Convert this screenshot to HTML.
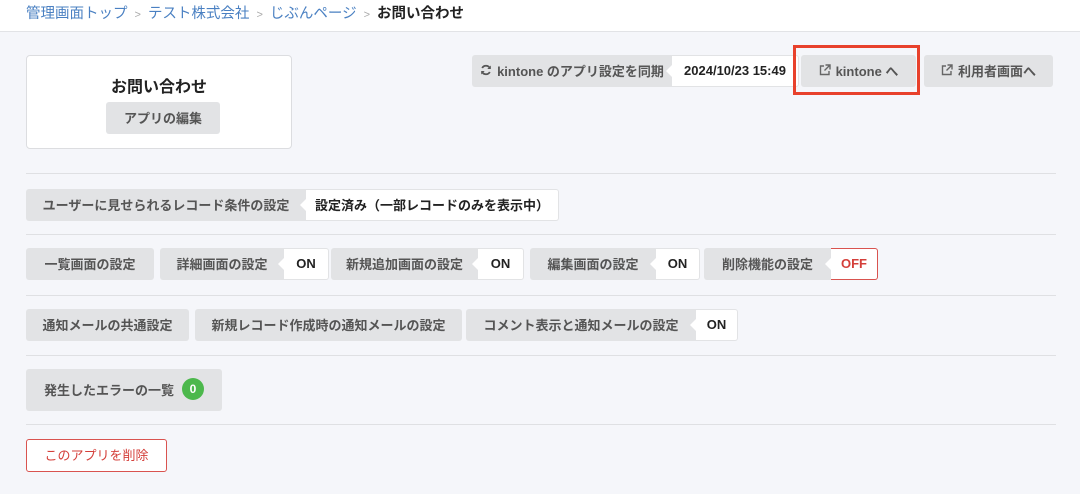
<!DOCTYPE html>
<html><head><meta charset="utf-8"><style>
*{box-sizing:border-box;margin:0;padding:0}
body{width:1080px;height:494px;background:#f5f6fa;font-family:"Liberation Sans","Noto Sans CJK JP",sans-serif;position:relative;overflow:hidden;color:#333}
.hdr{position:absolute;left:0;top:0;width:1080px;height:32px;background:#fff;border-bottom:1px solid #e2e3e6;font-size:14.5px;line-height:28px;padding-left:26px;white-space:nowrap}
.hdr a{color:#4a80c2;text-decoration:none}
.hdr .s{color:#aaa;font-size:11px;margin:0 7px}
.hdr b{color:#222}
.a{position:absolute}
.btn{position:absolute;background:#e2e3e5;border-radius:3px;color:#555;font-weight:bold;font-size:13px;display:flex;align-items:center;justify-content:center;white-space:nowrap;padding-bottom:2px}
.w{position:absolute;background:#fff;border-radius:0 3px 3px 0;color:#222;font-weight:bold;font-size:13px;display:flex;align-items:center;justify-content:center;white-space:nowrap;border:1px solid #e2e3e5;border-left:none;padding-bottom:2px}
.w:before{content:"";position:absolute;left:-6px;top:50%;margin-top:-6px;border-right:6px solid #fff;border-top:6px solid transparent;border-bottom:6px solid transparent}
.hr{position:absolute;left:26px;width:1030px;height:1px;background:#dfe0e3}
svg{margin-right:5px}
</style></head><body>
<div class="hdr"><a>管理画面トップ</a><span class="s">&gt;</span><a>テスト株式会社</a><span class="s">&gt;</span><a>じぶんページ</a><span class="s">&gt;</span><b>お問い合わせ</b></div>

<div class="a" style="left:26px;top:55px;width:266px;height:94px;background:#fff;border:1px solid #dcdde0;border-radius:4px"></div>
<div class="a" style="left:26px;top:73px;width:266px;text-align:center;font-weight:bold;font-size:16px;color:#222">お問い合わせ</div>
<div class="btn" style="left:106px;top:102px;width:114px;height:32px">アプリの編集</div>

<div class="btn" style="left:472px;top:55px;width:200px;height:32px;border-radius:3px 0 0 3px"><svg width="12" height="12" viewBox="0 0 12 12"><path d="M10 4.5A4.3 4.3 0 0 0 2.2 4M2 7.5A4.3 4.3 0 0 0 9.8 8" fill="none" stroke="#555" stroke-width="1.8"/><path d="M10.8 1.5V5H7.3zM1.2 10.5V7h3.5z" fill="#555"/></svg>kintone のアプリ設定を同期</div>
<div class="w" style="left:672px;top:55px;width:127px;height:32px">2024/10/23 15:49</div>
<div class="btn" style="left:801px;top:55px;width:115px;height:32px"><svg width="12" height="12" viewBox="0 0 12 12"><path d="M5 2H1.5v8.5H10V7M6.5 1H11v4.5M11 1L5.5 6.5" fill="none" stroke="#666" stroke-width="1.4"/></svg>kintone へ</div>
<div class="a" style="left:793px;top:45px;width:127px;height:50px;border:3px solid #e8412c"></div>
<div class="btn" style="left:924px;top:55px;width:129px;height:32px"><svg width="12" height="12" viewBox="0 0 12 12"><path d="M5 2H1.5v8.5H10V7M6.5 1H11v4.5M11 1L5.5 6.5" fill="none" stroke="#666" stroke-width="1.4"/></svg>利用者画面へ</div>

<div class="hr" style="top:173px"></div>
<div class="btn" style="left:26px;top:189px;width:280px;height:32px;border-radius:3px 0 0 3px">ユーザーに見せられるレコード条件の設定</div>
<div class="w" style="left:306px;top:189px;width:253px;height:32px">設定済み（一部レコードのみを表示中）</div>

<div class="hr" style="top:234px"></div>
<div class="btn" style="left:26px;top:248px;width:128px;height:32px">一覧画面の設定</div>
<div class="btn" style="left:160px;top:248px;width:124px;height:32px;border-radius:3px 0 0 3px">詳細画面の設定</div>
<div class="w" style="left:284px;top:248px;width:45px;height:32px">ON</div>
<div class="btn" style="left:331px;top:248px;width:147px;height:32px;border-radius:3px 0 0 3px">新規追加画面の設定</div>
<div class="w" style="left:478px;top:248px;width:46px;height:32px">ON</div>
<div class="btn" style="left:530px;top:248px;width:126px;height:32px;border-radius:3px 0 0 3px">編集画面の設定</div>
<div class="w" style="left:656px;top:248px;width:44px;height:32px">ON</div>
<div class="btn" style="left:704px;top:248px;width:127px;height:32px;border-radius:3px 0 0 3px">削除機能の設定</div>
<div class="w" style="left:831px;top:248px;width:47px;height:32px;border:1px solid #d9534f;border-left:none;color:#d43f3a">OFF</div>

<div class="hr" style="top:295px"></div>
<div class="btn" style="left:26px;top:309px;width:163px;height:32px">通知メールの共通設定</div>
<div class="btn" style="left:195px;top:309px;width:267px;height:32px">新規レコード作成時の通知メールの設定</div>
<div class="btn" style="left:466px;top:309px;width:230px;height:32px;border-radius:3px 0 0 3px">コメント表示と通知メールの設定</div>
<div class="w" style="left:696px;top:309px;width:42px;height:32px">ON</div>

<div class="hr" style="top:355px"></div>
<div class="btn" style="left:26px;top:369px;width:196px;height:42px">発生したエラーの一覧<span style="display:inline-block;width:22px;height:22px;border-radius:11px;background:#4cb84c;color:#fff;font-size:12px;line-height:22px;text-align:center;margin-left:8px">0</span></div>

<div class="hr" style="top:424px"></div>
<div class="btn" style="left:26px;top:439px;width:141px;height:33px;background:#fff;border:1px solid #d9534f;color:#d43f3a;font-weight:normal">このアプリを削除</div>
</body></html>
